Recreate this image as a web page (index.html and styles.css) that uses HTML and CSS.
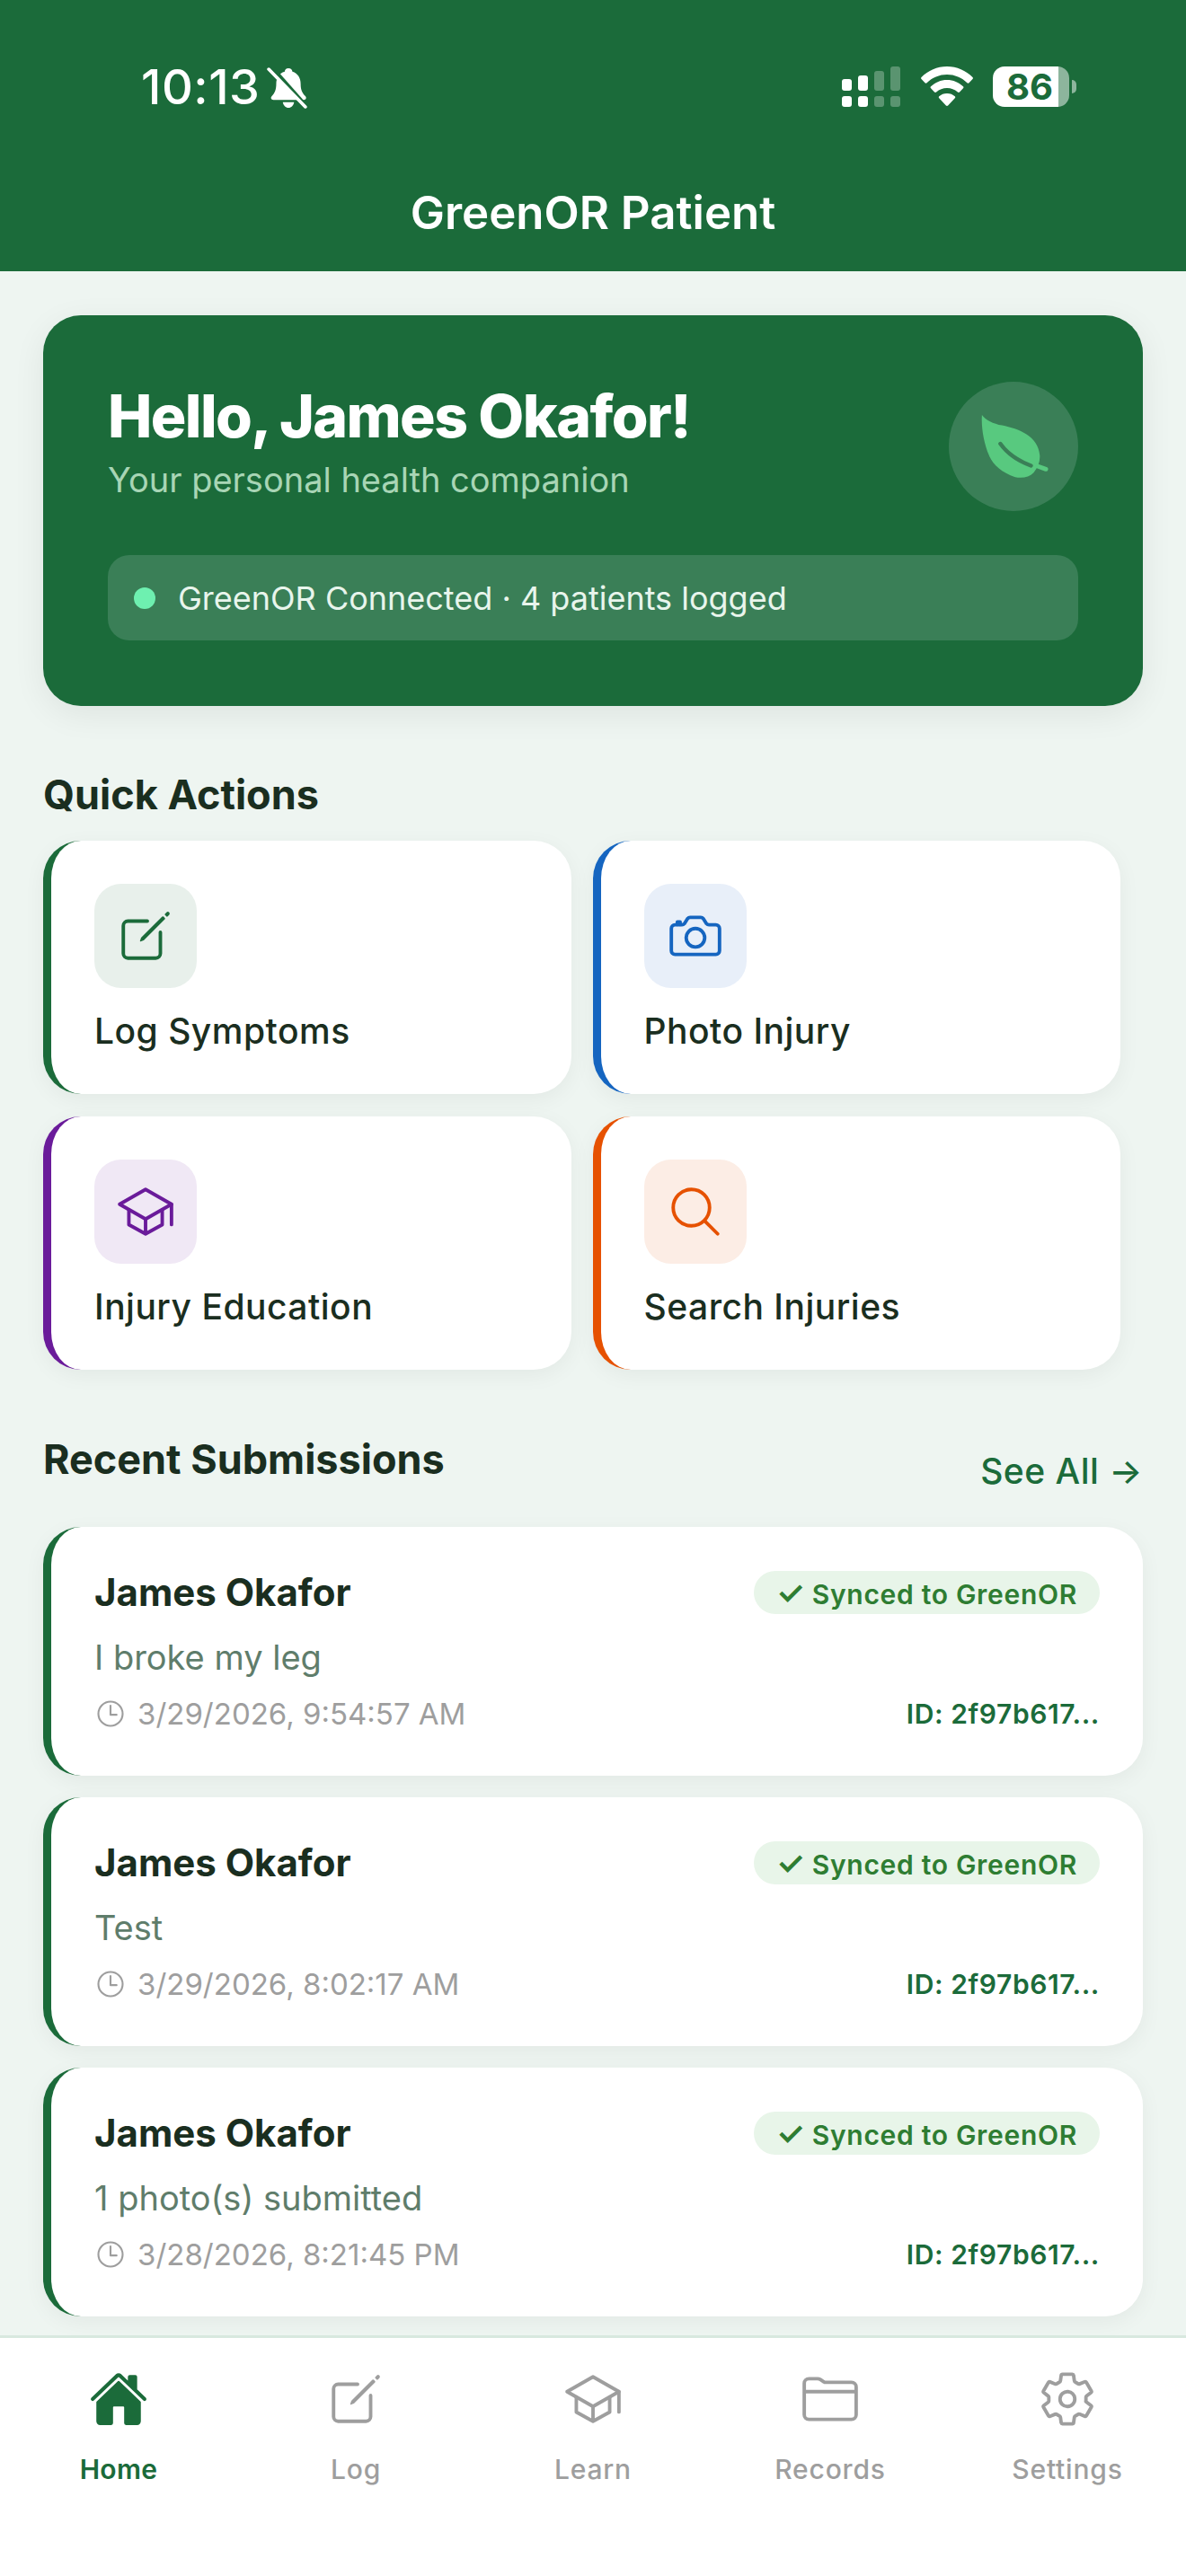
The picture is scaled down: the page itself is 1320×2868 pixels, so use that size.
FILE: index.html
```html
<!DOCTYPE html>
<html lang="en">
<head>
  <meta charset="UTF-8" />
  <title>GreenOR Patient</title>
  <link rel="stylesheet" href="styles.css">
</head>
<body>

  <!-- Icon set -->
  <svg class="icon-defs" xmlns="http://www.w3.org/2000/svg">
    <symbol id="i-log" viewBox="0 0 512 512">
      <path class="line" d="M384 224v184a40 40 0 01-40 40H104a40 40 0 01-40-40V168a40 40 0 0140-40h167.48" />
      <path class="solid" d="M459.94 53.25a16.06 16.06 0 00-23.22-.56L424.35 65a8 8 0 000 11.31l11.34 11.32a8 8 0 0011.34 0l12.06-12c6.1-6.09 6.67-16.01.85-22.38zM399.34 90L218.82 270.2a9 9 0 00-2.31 3.93L208.16 299a3.91 3.91 0 004.86 4.86l24.85-8.35a9 9 0 003.93-2.31L422 112.66a9 9 0 000-12.66l-9.95-10a9 9 0 00-12.71 0z" />
    </symbol>
    <symbol id="i-camera" viewBox="0 0 512 512">
      <path class="line" d="M350.54 148.68l-26.62-42.06C318.31 100.08 310.62 96 302 96h-92c-8.62 0-16.31 4.08-21.92 10.62l-26.62 42.06C155.85 155.23 148.62 160 140 160H80a32 32 0 00-32 32v192a32 32 0 0032 32h352a32 32 0 0032-32V192a32 32 0 00-32-32h-59c-8.65 0-16.85-4.77-22.46-11.32z" />
      <circle class="line" cx="256" cy="272" r="80" />
      <path class="line" d="M124 158v-22h-24v22" />
    </symbol>
    <symbol id="i-school" viewBox="0 0 512 512">
      <path class="line" d="M32 192L256 64l224 128-224 128L32 192z" />
      <path class="line" d="M112 240v128l144 80 144-80V240M480 368V192M256 320v128" />
    </symbol>
    <symbol id="i-search" viewBox="0 0 512 512">
      <path class="line" d="M221.09 64a157.09 157.09 0 10157.09 157.09A157.1 157.1 0 00221.09 64z" />
      <path class="line" d="M338.29 338.29L448 448" />
    </symbol>
    <symbol id="i-time" viewBox="0 0 512 512">
      <path class="line" d="M256 64C150 64 64 150 64 256s86 192 192 192 192-86 192-192S362 64 256 64z" />
      <path class="line" d="M256 128v144h96" />
    </symbol>
    <symbol id="i-home" viewBox="0 0 512 512">
      <path class="solid" d="M261.56 101.28a8 8 0 00-11.06 0L66.4 277.15a8 8 0 00-2.47 5.79L63.9 448a32 32 0 0032 32H192a16 16 0 0016-16V328a8 8 0 018-8h80a8 8 0 018 8v136a16 16 0 0016 16h96.06a32 32 0 0032-32V282.94a8 8 0 00-2.47-5.79z" />
      <path class="solid" d="M490.91 244.15l-74.8-71.56V64a16 16 0 00-16-16h-48a16 16 0 00-16 16v32l-57.92-55.38C272.77 35.14 264.71 32 256 32c-8.68 0-16.72 3.14-22.14 8.63l-212.7 203.5c-6.22 6-7 15.87-1.34 22.37A16 16 0 0043 267.56L250.5 69.28a8 8 0 0111.06 0l207.52 198.28a16 16 0 0022.59-.44c6.14-6.36 5.63-16.86-.76-22.97z" />
    </symbol>
    <symbol id="i-folder" viewBox="0 0 512 512">
      <path class="line" d="M440 432H72a40 40 0 01-40-40V120a40 40 0 0140-40h75.89a40 40 0 0122.19 6.72l27.84 18.56a40 40 0 0022.19 6.72H440a40 40 0 0140 40v240a40 40 0 01-40 40zM32 192h448" />
    </symbol>
    <symbol id="i-settings" viewBox="0 0 512 512">
      <path class="line" d="M262.29 192.31a64 64 0 1057.4 57.4 64.13 64.13 0 00-57.4-57.4zM416.39 256a154.34 154.34 0 01-1.53 20.79l45.21 35.46a10.81 10.81 0 012.45 13.75l-42.77 74a10.81 10.81 0 01-13.14 4.59l-44.9-18.08a16.11 16.11 0 00-15.17 1.75A164.48 164.48 0 01325 400.8a15.94 15.94 0 00-8.82 12.14l-6.73 47.89a11.08 11.08 0 01-10.68 9.17h-85.54a11.11 11.11 0 01-10.69-8.87l-6.72-47.82a16.07 16.07 0 00-9-12.22 155.3 155.3 0 01-21.46-12.57 16 16 0 00-15.11-1.71l-44.89 18.07a10.81 10.81 0 01-13.14-4.58l-42.77-74a10.8 10.8 0 012.45-13.75l38.21-30a16.05 16.05 0 006-14.08c-.36-4.17-.58-8.33-.58-12.5s.21-8.27.58-12.35a16 16 0 00-6.07-13.94l-38.19-30A10.81 10.81 0 0149.48 186l42.77-74a10.81 10.81 0 0113.14-4.59l44.9 18.08a16.11 16.11 0 0015.17-1.75A164.48 164.48 0 01187 111.2a15.94 15.94 0 008.82-12.14l6.73-47.89A11.08 11.08 0 01213.23 42h85.54a11.11 11.11 0 0110.69 8.87l6.72 47.82a16.07 16.07 0 009 12.22 155.3 155.3 0 0121.46 12.57 16 16 0 0015.11 1.71l44.89-18.07a10.81 10.81 0 0113.14 4.58l42.77 74a10.8 10.8 0 01-2.45 13.75l-38.21 30a16.05 16.05 0 00-6.05 14.08c.33 4.14.55 8.3.55 12.47z" />
    </symbol>
  </svg>

  <div class="phone">

    <!-- Green header with status bar -->
    <header class="top">
      <div class="status-bar">
        <div class="status-left">
          <span class="clock">10:13</span>
          <svg class="bell" viewBox="0 0 44 44">
            <path d="M23 1c2.500 0 4 1.600 4.200 3.600 5.800 1.800 8.800 6.800 8.800 13 0 6 1.500 9.500 5 13 1.500 1.500.8 4-1.500 4H7c-2.500 0-3.300-2.500-1.700-4 3-3 4.700-7 4.700-13 0-6.200 3-11.200 9-13 .2-2 1.500-3.600 4-3.600z" />
            <path d="M17 37h12c-.5 3.500-3 6-6 6s-5.500-2.500-6-6z" />
            <path class="bell-cut" d="M4.500 -1l38 43" />
            <path class="bell-slash" d="M2 2l39 40" />
          </svg>
        </div>
        <div class="status-right">
          <div class="signal">
            <div class="sig-col"><i class="h13"></i><i class="dot"></i></div>
            <div class="sig-col"><i class="h17"></i><i class="dot"></i></div>
            <div class="sig-col faded"><i class="h22"></i><i class="dot"></i></div>
            <div class="sig-col faded"><i class="h27"></i><i class="dot"></i></div>
          </div>
          <svg class="wifi" viewBox="0 0 58 44">
            <path d="M29 0c11 0 21 4.500 28.500 12 .6.600.6 1.400 0 2l-4 4.200c-.6.600-1.500.6-2.100 0C45.500 12.400 37.500 9 29 9S12.500 12.400 6.600 18.200c-.6.600-1.500.6-2.100 0l-4-4.200c-.6-.6-.6-1.400 0-2C8 4.500 18 0 29 0z" />
            <path d="M29 15c7 0 13 2.700 18 7.300.6.600.6 1.400 0 2l-4 4.200c-.6.600-1.500.6-2.100 0C37.600 25.500 33.500 24 29 24s-8.600 1.500-11.900 4.500c-.6.600-1.500.6-2.100 0l-4-4.200c-.6-.6-.6-1.400 0-2C16 17.700 22 15 29 15z" />
            <path d="M29 30c3.500 0 6.500 1.200 8.800 3.300.6.600.6 1.400 0 2l-7.700 8.200c-.6.600-1.600.6-2.200 0l-7.700-8.200c-.6-.6-.6-1.400 0-2C22.500 31.200 25.500 30 29 30z" />
          </svg>
          <div class="battery">
            <div class="battery-body"><span class="battery-num">86</span></div>
            <div class="battery-tip"></div>
          </div>
        </div>
      </div>
      <h1 class="app-title">GreenOR Patient</h1>
    </header>

    <main class="content">

      <!-- Welcome card -->
      <section class="hero">
        <div class="hero-top">
          <div class="hero-text">
            <h2 class="hero-name">Hello, James Okafor!</h2>
            <p class="hero-sub">Your personal health companion</p>
          </div>
          <div class="hero-badge">
            <svg class="leaf" viewBox="0 0 80 80">
              <path class="leaf-body" d="M4 4C8 10 17 14 27 16 46 20 68 28 70 50 70.500 57 68 64 63 70 58 75 50 77 42 75 26 70 16 60 12 50 6 36 3 18 4 4z" />
              <path class="leaf-vein" d="M25 37C32 47 44 56 60 62" />
              <path class="leaf-stem" d="M66 62l11 4" />
            </svg>
          </div>
        </div>
        <div class="hero-status">
          <span class="status-dot"></span>
          <span>GreenOR Connected · 4 patients logged</span>
        </div>
      </section>

      <!-- Quick actions -->
      <h3 class="section-title">Quick Actions</h3>
      <div class="action-grid">
        <div class="action-card green">
          <div class="action-icon"><svg class="ic"><use href="#i-log" /></svg></div>
          <span class="action-label">Log Symptoms</span>
        </div>
        <div class="action-card blue">
          <div class="action-icon"><svg class="ic"><use href="#i-camera" /></svg></div>
          <span class="action-label">Photo Injury</span>
        </div>
        <div class="action-card purple">
          <div class="action-icon"><svg class="ic"><use href="#i-school" /></svg></div>
          <span class="action-label">Injury Education</span>
        </div>
        <div class="action-card orange">
          <div class="action-icon"><svg class="ic"><use href="#i-search" /></svg></div>
          <span class="action-label">Search Injuries</span>
        </div>
      </div>

      <!-- Recent submissions -->
      <div class="recent-head">
        <h3 class="section-title">Recent Submissions</h3>
        <span class="see-all">See All →</span>
      </div>
      <div class="sub-list">
        <article class="sub-card">
          <div class="sub-row">
            <span class="sub-name">James Okafor</span>
            <span class="sync-badge"><span class="tick">✓</span> Synced to GreenOR</span>
          </div>
          <p class="sub-text">I broke my leg</p>
          <div class="sub-row">
            <span class="sub-date"><svg class="ic-time"><use href="#i-time" /></svg>3/29/2026, 9:54:57 AM</span>
            <span class="sub-id">ID: 2f97b617...</span>
          </div>
        </article>
        <article class="sub-card">
          <div class="sub-row">
            <span class="sub-name">James Okafor</span>
            <span class="sync-badge"><span class="tick">✓</span> Synced to GreenOR</span>
          </div>
          <p class="sub-text">Test</p>
          <div class="sub-row">
            <span class="sub-date"><svg class="ic-time"><use href="#i-time" /></svg>3/29/2026, 8:02:17 AM</span>
            <span class="sub-id">ID: 2f97b617...</span>
          </div>
        </article>
        <article class="sub-card">
          <div class="sub-row">
            <span class="sub-name">James Okafor</span>
            <span class="sync-badge"><span class="tick">✓</span> Synced to GreenOR</span>
          </div>
          <p class="sub-text">1 photo(s) submitted</p>
          <div class="sub-row">
            <span class="sub-date"><svg class="ic-time"><use href="#i-time" /></svg>3/28/2026, 8:21:45 PM</span>
            <span class="sub-id">ID: 2f97b617...</span>
          </div>
        </article>
      </div>
    </main>

    <!-- Bottom tabs -->
    <nav class="tabs">
      <div class="tab active"><svg class="ic"><use href="#i-home" /></svg><span>Home</span></div>
      <div class="tab"><svg class="ic"><use href="#i-log" /></svg><span>Log</span></div>
      <div class="tab"><svg class="ic"><use href="#i-school" /></svg><span>Learn</span></div>
      <div class="tab"><svg class="ic"><use href="#i-folder" /></svg><span>Records</span></div>
      <div class="tab"><svg class="ic"><use href="#i-settings" /></svg><span>Settings</span></div>
    </nav>
  </div>

</body>
</html>
```

FILE: styles.css
```css
/* Base */
* {
  box-sizing: border-box;
}
html, body {
  margin: 0;
  padding: 0;
}
body {
  font-family: 'Inter', 'Noto Sans', sans-serif;
  background: #eef5f1;
  color: #1a2e20;
}
h1, h2, h3, p {
  margin: 0;
}
.icon-defs {
  display: none;
}
.line {
  fill: none;
  stroke: currentColor;
  stroke-width: 30;
  stroke-linecap: round;
  stroke-linejoin: round;
}
.solid {
  fill: currentColor;
}
.ic {
  width: 66px;
  height: 66px;
  display: block;
}
.phone {
  width: 1320px;
  height: 2868px;
  display: flex;
  flex-direction: column;
  overflow: hidden;
}

/* Header */
.top {
  height: 302px;
  flex: none;
  background: #1b6b3a;
  color: #fff;
  padding: 0 0 0 157px;
}
.status-bar {
  height: 194px;
  display: flex;
  justify-content: space-between;
  align-items: flex-start;
  padding: 64px 122px 0 0;
}
.status-left {
  display: flex;
  align-items: center;
  gap: 8px;
}
.clock {
  font-size: 54px;
  font-weight: 500;
  line-height: 66px;
  letter-spacing: 0.5px;
}
.bell {
  width: 46px;
  height: 46px;
  fill: #fff;
  margin-top: 2px;
}
.bell-cut {
  fill: none;
  stroke: #1b6b3a;
  stroke-width: 4;
}
.bell-slash {
  fill: none;
  stroke: #fff;
  stroke-width: 3.5;
  stroke-linecap: round;
}
.status-right {
  display: flex;
  align-items: flex-start;
  padding-top: 10px;
}
.signal {
  display: flex;
  align-items: flex-end;
  gap: 7px;
  height: 45px;
  margin-right: 23px;
}
.sig-col {
  display: flex;
  flex-direction: column;
  gap: 6px;
  width: 11px;
}
.sig-col i {
  display: block;
  background: #fff;
  border-radius: 3px;
}
.sig-col.faded i {
  background: rgba(255,255,255,0.28);
}
.sig-col .dot { height: 12px; }
.sig-col .h13 { height: 13px; }
.sig-col .h17 { height: 17px; }
.sig-col .h22 { height: 22px; }
.sig-col .h27 { height: 27px; }
.wifi {
  width: 58px;
  height: 44px;
  fill: #fff;
  margin-right: 22px;
}
.battery {
  display: flex;
  align-items: center;
  height: 45px;
}
.battery-body {
  width: 85px;
  height: 45px;
  border-radius: 13px;
  background: linear-gradient(90deg, #fff 86%, rgba(255,255,255,0.5) 86%);
  color: #1b6b3a;
  padding-left: 15px;
}
.battery-num {
  font-size: 40px;
  font-weight: 700;
  line-height: 45px;
  display: block;
}
.battery-tip {
  width: 5px;
  height: 15px;
  margin-left: 3px;
  border-radius: 0 8px 8px 0;
  background: rgba(255,255,255,0.5);
}
.app-title {
  font-size: 51px;
  font-weight: 600;
  line-height: 60px;
  margin-left: -157px;
  text-align: center;
  margin-top: 13px;
}

/* Main area */
.content {
  flex: 1;
  min-height: 0;
  padding: 49px 48px 0;
  overflow: hidden;
}

/* Hero */
.hero {
  height: 435px;
  background: #1b6b3a;
  border-radius: 42px;
  padding: 72px;
  box-shadow: 0 9px 36px rgba(0,0,0,0.07);
}
.hero-top {
  display: flex;
  justify-content: space-between;
  align-items: center;
  height: 147px;
}
.hero-text {
  margin-top: -12px;
}
.hero-name {
  font-size: 66px;
  font-weight: 800;
  line-height: 78px;
  letter-spacing: -1.6px;
  color: #fff;
}
.hero-sub {
  font-size: 38px;
  line-height: 48px;
  margin-top: 8px;
  color: #a8d5b5;
}
.hero-badge {
  width: 144px;
  height: 144px;
  border-radius: 50%;
  background: #3a7f57;
  display: flex;
  align-items: center;
  justify-content: center;
}
.leaf {
  width: 78px;
  height: 78px;
}
.leaf-body {
  fill: #58c97f;
}
.leaf-vein {
  fill: none;
  stroke: #3a7f57;
  stroke-width: 4.5;
  stroke-linecap: round;
}
.leaf-stem {
  fill: none;
  stroke: #58c97f;
  stroke-width: 5;
  stroke-linecap: round;
}
.hero-status {
  height: 95px;
  margin-top: 48px;
  padding: 0 29px;
  border-radius: 24px;
  background: #3a7f57;
  display: flex;
  align-items: center;
  gap: 25px;
  color: #e8f5ec;
  font-size: 36px;
}
.status-dot {
  width: 24px;
  height: 24px;
  border-radius: 50%;
  background: #6ef0b0;
}

/* Quick actions */
.section-title {
  font-size: 45px;
  font-weight: 700;
  line-height: 54px;
  color: #1a2e20;
}
.content > .section-title {
  margin: 72px 0 24px;
}
.action-grid {
  display: grid;
  grid-template-columns: 48% 48%;
  gap: 25px 24px;
}
.action-card {
  height: 282px;
  background: #fff;
  border-left: 9px solid #1b6b3a;
  border-radius: 42px;
  padding: 48px 48px;
  box-shadow: 0 6px 24px rgba(0,0,0,0.05);
}
.action-card.blue { border-left-color: #1565c0; }
.action-card.purple { border-left-color: #6a1b9a; }
.action-card.orange { border-left-color: #e65100; }
.action-icon {
  width: 114px;
  height: 116px;
  border-radius: 30px;
  background: #e8f0eb;
  color: #1b6b3a;
  display: flex;
  align-items: center;
  justify-content: center;
}
.blue .action-icon { background: #e8eff9; color: #1565c0; }
.purple .action-icon { background: #f0e8f5; color: #6a1b9a; }
.orange .action-icon { background: #fcede5; color: #e65100; }
.action-label {
  display: block;
  margin-top: 24px;
  font-size: 39px;
  font-weight: 500;
  line-height: 48px;
  letter-spacing: 0.5px;
  color: #1a2e20;
}

/* Submissions */
.recent-head {
  display: flex;
  justify-content: space-between;
  align-items: flex-start;
  margin: 73px 0 35px;
}
.see-all {
  font-size: 39px;
  font-weight: 500;
  line-height: 54px;
  letter-spacing: 0.5px;
  color: #1b6b3a;
  margin-top: 13px;
}
.sub-list {
  display: flex;
  flex-direction: column;
  gap: 24px;
}
.sub-card {
  height: 277px;
  background: #fff;
  border-left: 9px solid #1b6b3a;
  border-radius: 42px;
  padding: 48px 48px 0;
  box-shadow: 0 6px 24px rgba(0,0,0,0.05);
}
.sub-row {
  display: flex;
  justify-content: space-between;
  align-items: center;
}
.sub-name {
  font-size: 42px;
  font-weight: 700;
  line-height: 50px;
  color: #1a2e20;
}
.sync-badge {
  height: 48px;
  padding: 0 25px;
  border-radius: 24px;
  background: #e8f5e9;
  color: #2e7d32;
  font-size: 30px;
  font-weight: 600;
  line-height: 48px;
  letter-spacing: 0.7px;
}
.tick {
  font-size: 36px;
  letter-spacing: 0;
}
.sub-text {
  margin: 23px 0 15px;
  font-size: 38px;
  line-height: 48px;
  color: #5f7d6b;
}
.sub-date {
  display: flex;
  align-items: center;
  gap: 12px;
  font-size: 33px;
  line-height: 48px;
  color: #9e9e9e;
}
.ic-time {
  width: 36px;
  height: 36px;
}
.sub-id {
  font-size: 30px;
  font-weight: 600;
  letter-spacing: 0.6px;
  color: #1b6b3a;
}

/* Bottom tabs */
.tabs {
  flex: none;
  height: 268px;
  background: #fff;
  border-top: 3px solid #d8e8df;
  display: grid;
  grid-template-columns: repeat(5, 1fr);
  padding-top: 35px;
}
.tab {
  display: flex;
  flex-direction: column;
  align-items: center;
  color: #9e9e9e;
  font-size: 30px;
  font-weight: 500;
  line-height: 36px;
  letter-spacing: 0.8px;
}
.tab span {
  margin-top: 27px;
}
.tab.active {
  color: #1b6b3a;
  font-weight: 600;
  letter-spacing: 0.3px;
}
```
